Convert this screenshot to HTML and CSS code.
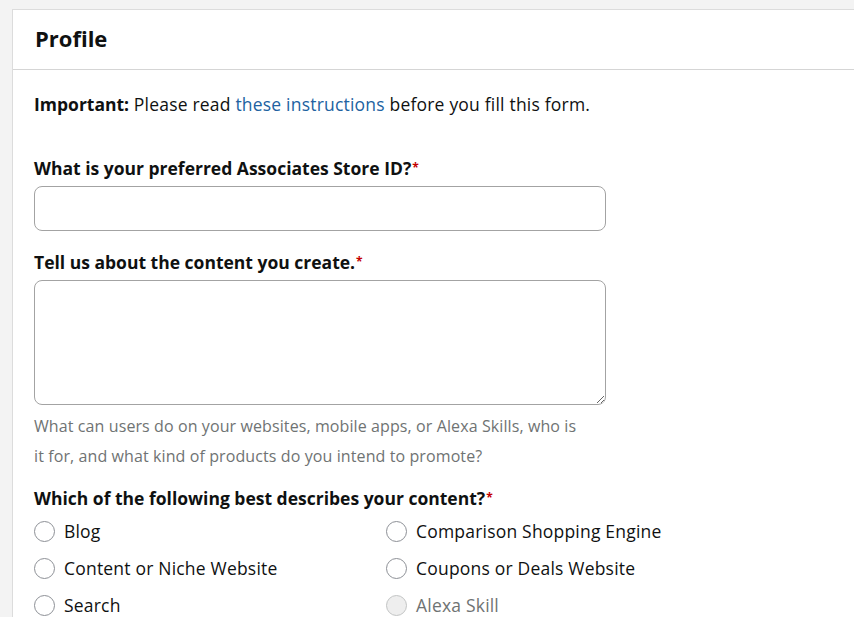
FILE: index.html
```html
<!DOCTYPE html>
<html lang="en">
<head>
<meta charset="utf-8">
<title>Profile</title>
<link rel="stylesheet" href="styles.css">
</head>
<body>
<div class="page">
  <section class="card">
    <header class="card-header"><h1>Profile</h1></header>
    <div class="card-body">
      <p class="note"><b>Important:</b> Please read <a href="#">these instructions</a> before you fill this form.</p>

      <div class="field">
        <label class="label" for="store">What is your preferred Associates Store ID?<span class="req">*</span></label>
        <input class="input" id="store" type="text">
      </div>

      <div class="field">
        <label class="label" for="content">Tell us about the content you create.<span class="req">*</span></label>
        <textarea class="textarea" id="content"></textarea>
        <p class="help">What can users do on your websites, mobile apps, or Alexa Skills, who is it for, and what kind of products do you intend to promote?</p>
      </div>

      <div class="field">
        <div class="label">Which of the following best describes your content?<span class="req">*</span></div>
        <div class="radios">
          <label class="radio"><span class="dot"></span>Blog</label>
          <label class="radio"><span class="dot"></span>Comparison Shopping Engine</label>
          <label class="radio"><span class="dot"></span>Content or Niche Website</label>
          <label class="radio"><span class="dot"></span>Coupons or Deals Website</label>
          <label class="radio"><span class="dot"></span>Search</label>
          <label class="radio disabled"><span class="dot"></span>Alexa Skill</label>
        </div>
      </div>
    </div>
  </section>
</div>
</body>
</html>
```
FILE: styles.css
```css
html, body {
  margin: 0;
  padding: 0;
  background: #f3f3f3;
  overflow: hidden;
}
body {
  font-family: "Open Sans", "Noto Sans", sans-serif;
  color: #0f1111;
  font-size: 17.5px;
  letter-spacing: 0.2px;
}
.page {
  padding: 9px 0 0 12px;
}
.card {
  background: #fff;
  border: 1px solid #dcdcdc;
  margin-right: -20px;
  min-height: 700px;
}
.card-header {
  box-sizing: border-box;
  height: 60px;
  border-bottom: 1px solid #d5d5d5;
  display: flex;
  align-items: center;
  padding: 0 0 4px 22px;
}
.card-header h1 {
  margin: 0;
  font-size: 22px;
  font-weight: 700;
  line-height: 28px;
  letter-spacing: 0;
}
.card-body {
  padding: 24px 0 0 21px;
}
.note {
  margin: 0 0 44px;
  line-height: 20px;
}
.note b {
  letter-spacing: 0;
}
.note a {
  color: #2162a1;
  text-decoration: none;
}
.field {
  display: flex;
  flex-direction: column;
  align-items: flex-start;
}
.label {
  font-weight: 700;
  line-height: 20px;
  margin-bottom: 8px;
  letter-spacing: 0;
}
.req {
  color: #c40000;
  font-size: 12px;
  line-height: 10px;
  position: relative;
  top: -3px;
  margin-left: 1px;
}
.input, .textarea {
  box-sizing: border-box;
  width: 572px;
  border: 1px solid #a3a3a3;
  border-radius: 8px;
  background: #fff;
  font: inherit;
  margin: 0;
}
.input {
  height: 45px;
  margin-bottom: 21px;
}
.textarea {
  height: 125px;
  resize: vertical;
  display: block;
}
.help {
  margin: 6px 0 17px;
  width: 548px;
  color: #6f7373;
  font-size: 16px;
  letter-spacing: 0.1px;
  line-height: 30px;
}
.radios {
  display: grid;
  grid-template-columns: 352px 1fr;
  row-gap: 15px;
  margin-top: 4px;
}
.radio {
  display: flex;
  align-items: center;
  gap: 9px;
  line-height: 22px;
}
.dot {
  box-sizing: border-box;
  width: 21px;
  height: 21px;
  border: 1.5px solid #8d9096;
  border-radius: 50%;
  background: #fff;
  flex: none;
}
.radio.disabled {
  color: #6f7373;
}
.radio.disabled .dot {
  background: #eeeeee;
  border-color: #c2c4c4;
}
```
